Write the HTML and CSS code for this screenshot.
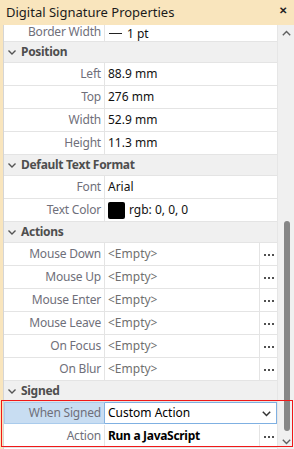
FILE: index.html
```html
<!DOCTYPE html>
<html lang="en">
<head>
    <meta charset="UTF-8">
    <meta name="viewport" content="width=device-width, initial-scale=1.0">
    <title>Digital Signature Properties</title>
    <link rel="stylesheet" href="styles.css">
</head>
<body>
    <div class="window">
        <div class="titlebar">
            <span class="title">Digital Signature Properties</span>
            <span class="close">&#x2715;</span>
        </div>

        <div class="panel">
            <div class="grid">
                <div class="row partial">
                    <div class="label">Border Width</div>
                    <div class="value wide"><span class="line-sample"></span>1 pt</div>
                </div>

                <!-- Position -->
                <div class="category">
                    <svg class="chev" width="8" height="5" viewBox="0 0 8 5"><path d="M0.5 0.5 L4 4 L7.5 0.5" fill="none" stroke="#555" stroke-width="1.4"/></svg>
                    Position
                </div>
                <div class="row"><div class="label">Left</div><div class="value wide">88.9 mm</div></div>
                <div class="row"><div class="label">Top</div><div class="value wide">276 mm</div></div>
                <div class="row"><div class="label">Width</div><div class="value wide">52.9 mm</div></div>
                <div class="row"><div class="label">Height</div><div class="value wide">11.3 mm</div></div>

                <!-- Default Text Format -->
                <div class="category">
                    <svg class="chev" width="8" height="5" viewBox="0 0 8 5"><path d="M0.5 0.5 L4 4 L7.5 0.5" fill="none" stroke="#555" stroke-width="1.4"/></svg>
                    Default Text Format
                </div>
                <div class="row"><div class="label">Font</div><div class="value wide">Arial</div></div>
                <div class="row">
                    <div class="label">Text Color</div>
                    <div class="value wide"><span class="swatch"></span>rgb: 0, 0, 0</div>
                </div>

                <!-- Actions -->
                <div class="category">
                    <svg class="chev" width="8" height="5" viewBox="0 0 8 5"><path d="M0.5 0.5 L4 4 L7.5 0.5" fill="none" stroke="#555" stroke-width="1.4"/></svg>
                    Actions
                </div>
                <div class="row"><div class="label">Mouse Down</div><div class="value empty">&lt;Empty&gt;</div><div class="dots"><svg width="10" height="2" viewBox="0 0 10 2"><rect x="0" width="2" height="2"/><rect x="4" width="2" height="2"/><rect x="8" width="2" height="2"/></svg></div></div>
                <div class="row"><div class="label">Mouse Up</div><div class="value empty">&lt;Empty&gt;</div><div class="dots"><svg width="10" height="2" viewBox="0 0 10 2"><rect x="0" width="2" height="2"/><rect x="4" width="2" height="2"/><rect x="8" width="2" height="2"/></svg></div></div>
                <div class="row"><div class="label">Mouse Enter</div><div class="value empty">&lt;Empty&gt;</div><div class="dots"><svg width="10" height="2" viewBox="0 0 10 2"><rect x="0" width="2" height="2"/><rect x="4" width="2" height="2"/><rect x="8" width="2" height="2"/></svg></div></div>
                <div class="row"><div class="label">Mouse Leave</div><div class="value empty">&lt;Empty&gt;</div><div class="dots"><svg width="10" height="2" viewBox="0 0 10 2"><rect x="0" width="2" height="2"/><rect x="4" width="2" height="2"/><rect x="8" width="2" height="2"/></svg></div></div>
                <div class="row"><div class="label">On Focus</div><div class="value empty">&lt;Empty&gt;</div><div class="dots"><svg width="10" height="2" viewBox="0 0 10 2"><rect x="0" width="2" height="2"/><rect x="4" width="2" height="2"/><rect x="8" width="2" height="2"/></svg></div></div>
                <div class="row"><div class="label">On Blur</div><div class="value empty">&lt;Empty&gt;</div><div class="dots"><svg width="10" height="2" viewBox="0 0 10 2"><rect x="0" width="2" height="2"/><rect x="4" width="2" height="2"/><rect x="8" width="2" height="2"/></svg></div></div>

                <!-- Signed -->
                <div class="category">
                    <svg class="chev" width="8" height="5" viewBox="0 0 8 5"><path d="M0.5 0.5 L4 4 L7.5 0.5" fill="none" stroke="#555" stroke-width="1.4"/></svg>
                    Signed
                </div>
                <div class="row selected">
                    <div class="label">When Signed</div>
                    <div class="value combo">
                        Custom Action
                        <svg class="combo-arrow" width="9" height="6" viewBox="0 0 9 6"><path d="M0.8 0.8 L4.5 4.5 L8.2 0.8" fill="none" stroke="#333" stroke-width="1.5"/></svg>
                    </div>
                </div>
                <div class="row">
                    <div class="label">Action</div>
                    <div class="value strong">Run a JavaScript</div>
                    <div class="dots"><svg width="10" height="2" viewBox="0 0 10 2"><rect x="0" width="2" height="2"/><rect x="4" width="2" height="2"/><rect x="8" width="2" height="2"/></svg></div>
                </div>
            </div>

            <div class="scrollbar">
                <svg class="arrow" width="9" height="6" viewBox="0 0 9 6"><path d="M0.8 5.2 L4.5 1.5 L8.2 5.2" fill="none" stroke="#606060" stroke-width="1.4"/></svg>
                <div class="track"><div class="thumb"></div></div>
                <svg class="arrow" width="9" height="6" viewBox="0 0 9 6"><path d="M0.8 0.8 L4.5 4.5 L8.2 0.8" fill="none" stroke="#606060" stroke-width="1.4"/></svg>
            </div>
        </div>

        <!-- annotation frame -->
        <div class="mark"></div>
    </div>
</body>
</html>
```

FILE: styles.css
```css
body {
    margin: 0;
    font-family: 'Noto Sans', 'Open Sans', sans-serif;
    font-size: 12px;
    background: #ffffff;
}
.window {
    position: relative;
    width: 294px;
    height: 449px;
    background: #f9e5bd;
    display: flex;
    flex-direction: column;
    overflow: hidden;
}
.titlebar {
    height: 25px;
    display: flex;
    align-items: center;
    justify-content: space-between;
    padding: 0 6px 0 6px;
    box-sizing: border-box;
    color: #1b1b1b;
    flex-shrink: 0;
}
.title {
    font-size: 13px;
    margin-top: -1px;
}
.close {
    font-size: 10px;
    font-weight: bold;
    color: #222;
    margin-top: -6px;
    margin-right: 1px;
}
.panel {
    flex: 1;
    display: flex;
    margin-left: 3px;
    background: #ffffff;
    min-height: 0;
}
.grid {
    flex: 1;
    border-left: 1px solid #d5d5d5;
}
.row {
    display: flex;
    height: 23px;
    border-bottom: 1px solid #e4e4e4;
    box-sizing: border-box;
}
.row.partial {
    height: 17px;
}
.row.partial .label,
.row.partial .value {
    line-height: 13px;
}
.label {
    width: 101px;
    flex-shrink: 0;
    border-right: 1px solid #e4e4e4;
    text-align: right;
    padding-right: 3px;
    box-sizing: border-box;
    color: #6f6f7a;
    line-height: 22px;
    white-space: nowrap;
    letter-spacing: -0.2px;
}
.value {
    flex: 1;
    padding-left: 3px;
    line-height: 22px;
    color: #111;
    white-space: nowrap;
    display: flex;
    align-items: center;
}
.value.empty {
    color: #707070;
    border-right: 1px solid #e4e4e4;
}
.value.strong {
    font-weight: bold;
    color: #000;
    border-right: 1px solid #e4e4e4;
    letter-spacing: -0.3px;
}
.dots {
    width: 17px;
    flex-shrink: 0;
    display: flex;
    align-items: center;
    justify-content: center;
    fill: #505050;
    padding-top: 1px;
    box-sizing: border-box;
}
.line-sample {
    display: inline-block;
    width: 13px;
    height: 1px;
    background: #222;
    margin: 0 5px 0 1px;
}
.swatch {
    display: inline-block;
    width: 17px;
    height: 17px;
    border-radius: 2px;
    background: #000;
    margin: 0 4px 0 0;
}
.category {
    height: 21px;
    background: #f0f0f0;
    border-bottom: 1px solid #e4e4e4;
    box-sizing: border-box;
    display: flex;
    align-items: center;
    font-weight: bold;
    color: #4e4e4e;
    line-height: 20px;
    letter-spacing: -0.3px;
}
.chev {
    margin: 1px 5px 0 4px;
}
.row.selected {
    border-bottom-color: #ffffff;
}
.row.selected .label {
    background: #c8ddf2;
    border: 1px solid #a9cbec;
    border-right: 1px solid #86b3e0;
    line-height: 20px;
}
.combo {
    border: 1px solid #7fb0e2;
    border-left: none;
    justify-content: space-between;
    padding-right: 5px;
    line-height: 20px;
    color: #000;
}
.combo-arrow {
    margin-top: 1px;
}
.scrollbar {
    width: 17px;
    flex-shrink: 0;
    background: #f0f0f0;
    border-left: 1px solid #e6e6e6;
    box-sizing: border-box;
    display: flex;
    flex-direction: column;
    align-items: center;
    padding: 5px 0 4px;
}
.arrow {
    flex-shrink: 0;
    margin: 0 0 0 1px;
}
.track {
    flex: 1;
    width: 100%;
    display: flex;
    flex-direction: column;
    justify-content: flex-end;
    align-items: center;
    padding-bottom: 8px;
}
.thumb {
    width: 6px;
    height: 210px;
    border-radius: 3px;
    background: #868686;
    margin-left: 1px;
}
.mark {
    position: absolute;
    left: 1px;
    top: 400px;
    width: 292px;
    height: 47px;
    border: 1.5px solid #f01818;
    box-sizing: border-box;
    pointer-events: none;
}
```
